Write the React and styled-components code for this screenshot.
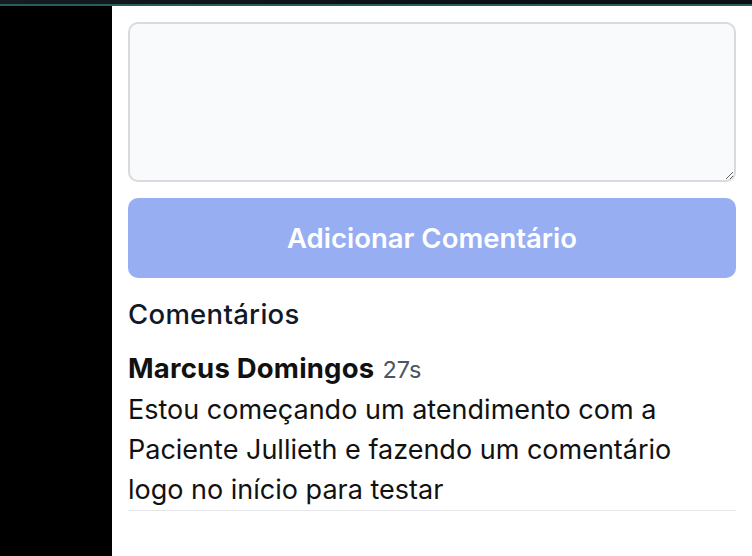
import styled, { createGlobalStyle } from 'styled-components';

const GlobalStyle = createGlobalStyle`
    html, body {
        margin: 0;
        padding: 0;
        background: #ffffff;
    }
    body {
        font-family: Inter, "Noto Sans", "Liberation Sans", sans-serif;
    }
    * {
        box-sizing: border-box;
    }
`;

const Page = styled.div`
    width: 752px;
    height: 556px;
    display: flex;
    flex-direction: column;
    overflow: hidden;
`;

const TopBar = styled.div`
    height: 6px;
    flex-shrink: 0;
    background: linear-gradient(90deg, #141c1f 0%, #0b1114 50%, #081015 100%);
    border-bottom: 2px solid #2b5d5a;
`;

const Body = styled.div`
    flex: 1;
    display: flex;
`;

const Sidebar = styled.div`
    width: 112px;
    background: #000000;
    flex-shrink: 0;
`;

const Main = styled.div`
    flex: 1;
    padding: 16px 16px 0 16px;
    display: flex;
    flex-direction: column;
`;

const TextArea = styled.textarea`
    width: 100%;
    height: 160px;
    background: #f9fafb;
    border: 2px solid #d8dade;
    border-radius: 10px;
    resize: vertical;
    padding: 12px 16px;
    font-family: inherit;
    font-size: 24px;
    outline: none;
`;

const SubmitButton = styled.button`
    margin-top: 16px;
    height: 80px;
    width: 100%;
    border: none;
    border-radius: 10px;
    background: #97aef3;
    color: #ffffff;
    font-family: inherit;
    font-size: 27.5px;
    font-weight: 600;
    cursor: not-allowed;
`;

const Heading = styled.h3`
    margin: 19px 0 0 0;
    font-size: 27.5px;
    line-height: 34px;
    font-weight: 500;
    letter-spacing: 0.3px;
    color: #111827;
`;

const CommentItem = styled.div`
    margin-top: 17px;
    border-bottom: 1px solid #e5e7eb;
`;

const CommentHeader = styled.div`
    display: flex;
    align-items: baseline;
    gap: 8px;
    line-height: 40px;
`;

const Author = styled.span`
    font-size: 27.5px;
    font-weight: 700;
    letter-spacing: 0.2px;
    color: #111111;
`;

const Time = styled.span`
    font-size: 23.5px;
    color: #4b5563;
`;

const CommentText = styled.p`
    margin: 0;
    padding-right: 24px;
    font-size: 27px;
    line-height: 40px;
    color: #111111;
`;

const comments = [
    {
        author: 'Marcus Domingos',
        time: '27s',
        text: 'Estou começando um atendimento com a Paciente Jullieth e fazendo um comentário logo no início para testar',
    },
];

function App() {
    return (
        <>
        <GlobalStyle />
        <Page>
            <TopBar />
            <Body>
                <Sidebar />
                <Main>
                    <TextArea />
                    <SubmitButton disabled>Adicionar Comentário</SubmitButton>
                    <Heading>Comentários</Heading>
                    {comments.map((c, i) => (
                        <CommentItem key={i}>
                            <CommentHeader>
                                <Author>{c.author}</Author>
                                <Time>{c.time}</Time>
                            </CommentHeader>
                            <CommentText>{c.text}</CommentText>
                        </CommentItem>
                    ))}
                </Main>
            </Body>
        </Page>
        </>
    );
}

export default App;
